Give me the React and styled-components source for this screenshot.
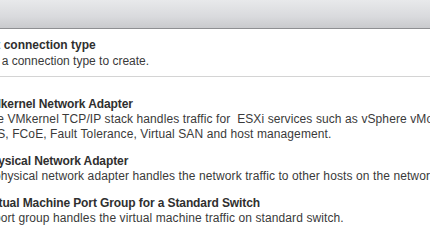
import React from "react";
import styled, { createGlobalStyle } from "styled-components";

const GlobalStyle = createGlobalStyle`
    body {
        margin: 0;
        background: #ffffff;
        font-family: "Liberation Sans", Arial, sans-serif;
        font-size: 12px;
        color: #333333;
    }
`;

const Page = styled.main`
    width: 430px;
    height: 242px;
    overflow: hidden;
    background: #ffffff;
`;

const TitleBar = styled.div`
    height: 28px;
    background: linear-gradient(to bottom, #e8e9eb 0%, #d9dadd 60%, #c9cacd 100%);
    border-bottom: 1px solid #8e8f92;
`;

//the page is cropped on the left, so the content runs past the edge
const Content = styled.div`
    margin-left: -35px;
    white-space: nowrap;
`;

const StepHeader = styled.div`
    padding-top: 8px;
    padding-bottom: 7px;
    border-bottom: 1px solid #d4d4d4;
    margin-right: -40px;
    line-height: 16px;
`;

const StepTitle = styled.div`
    font-weight: bold;
    color: #2f2f2f;
`;

const StepText = styled.div`
    color: #3a3a3a;
`;

const Options = styled.div`
    display: flex;
    flex-direction: column;
    gap: 12px;
    padding-top: 20px;
    padding-left: 18px;
    line-height: 15px;
`;

const Option = styled.div`
    display: flex;
    flex-direction: column;
`;

const OptionTitle = styled.div`
    font-weight: bold;
    color: #2f2f2f;
    letter-spacing: -0.1px;
`;

const OptionText = styled.div`
    color: #3a3a3a;
    white-space: pre;
    letter-spacing: 0.1px;
    margin-left: ${(p) => p.$shift || 0}px;
`;

const options = [
    {
        title: "VMkernel Network Adapter",
        lines: [
            { text: "The VMkernel TCP/IP stack handles traffic for  ESXi services such as vSphere vMotion, iSCSI," },
            { text: "NFS, FCoE, Fault Tolerance, Virtual SAN and host management.", shift: -2 },
        ],
    },
    {
        title: "Physical Network Adapter",
        lines: [{ text: "A physical network adapter handles the network traffic to other hosts on the network." }],
    },
    {
        title: "Virtual Machine Port Group for a Standard Switch",
        lines: [{ text: "A port group handles the virtual machine traffic on standard switch." }],
    },
];

function App() {
    return (
        <Page>
            <GlobalStyle />
            <TitleBar />
            <Content>
                <StepHeader>
                    <StepTitle>Select connection type</StepTitle>
                    <StepText>Select a connection type to create.</StepText>
                </StepHeader>
                <Options>
                    {options.map((opt) => (
                        <Option key={opt.title}>
                            <OptionTitle>{opt.title}</OptionTitle>
                            {opt.lines.map((line) => (
                                <OptionText key={line.text} $shift={line.shift}>
                                    {line.text}
                                </OptionText>
                            ))}
                        </Option>
                    ))}
                </Options>
            </Content>
        </Page>
    );
}

export default App;
